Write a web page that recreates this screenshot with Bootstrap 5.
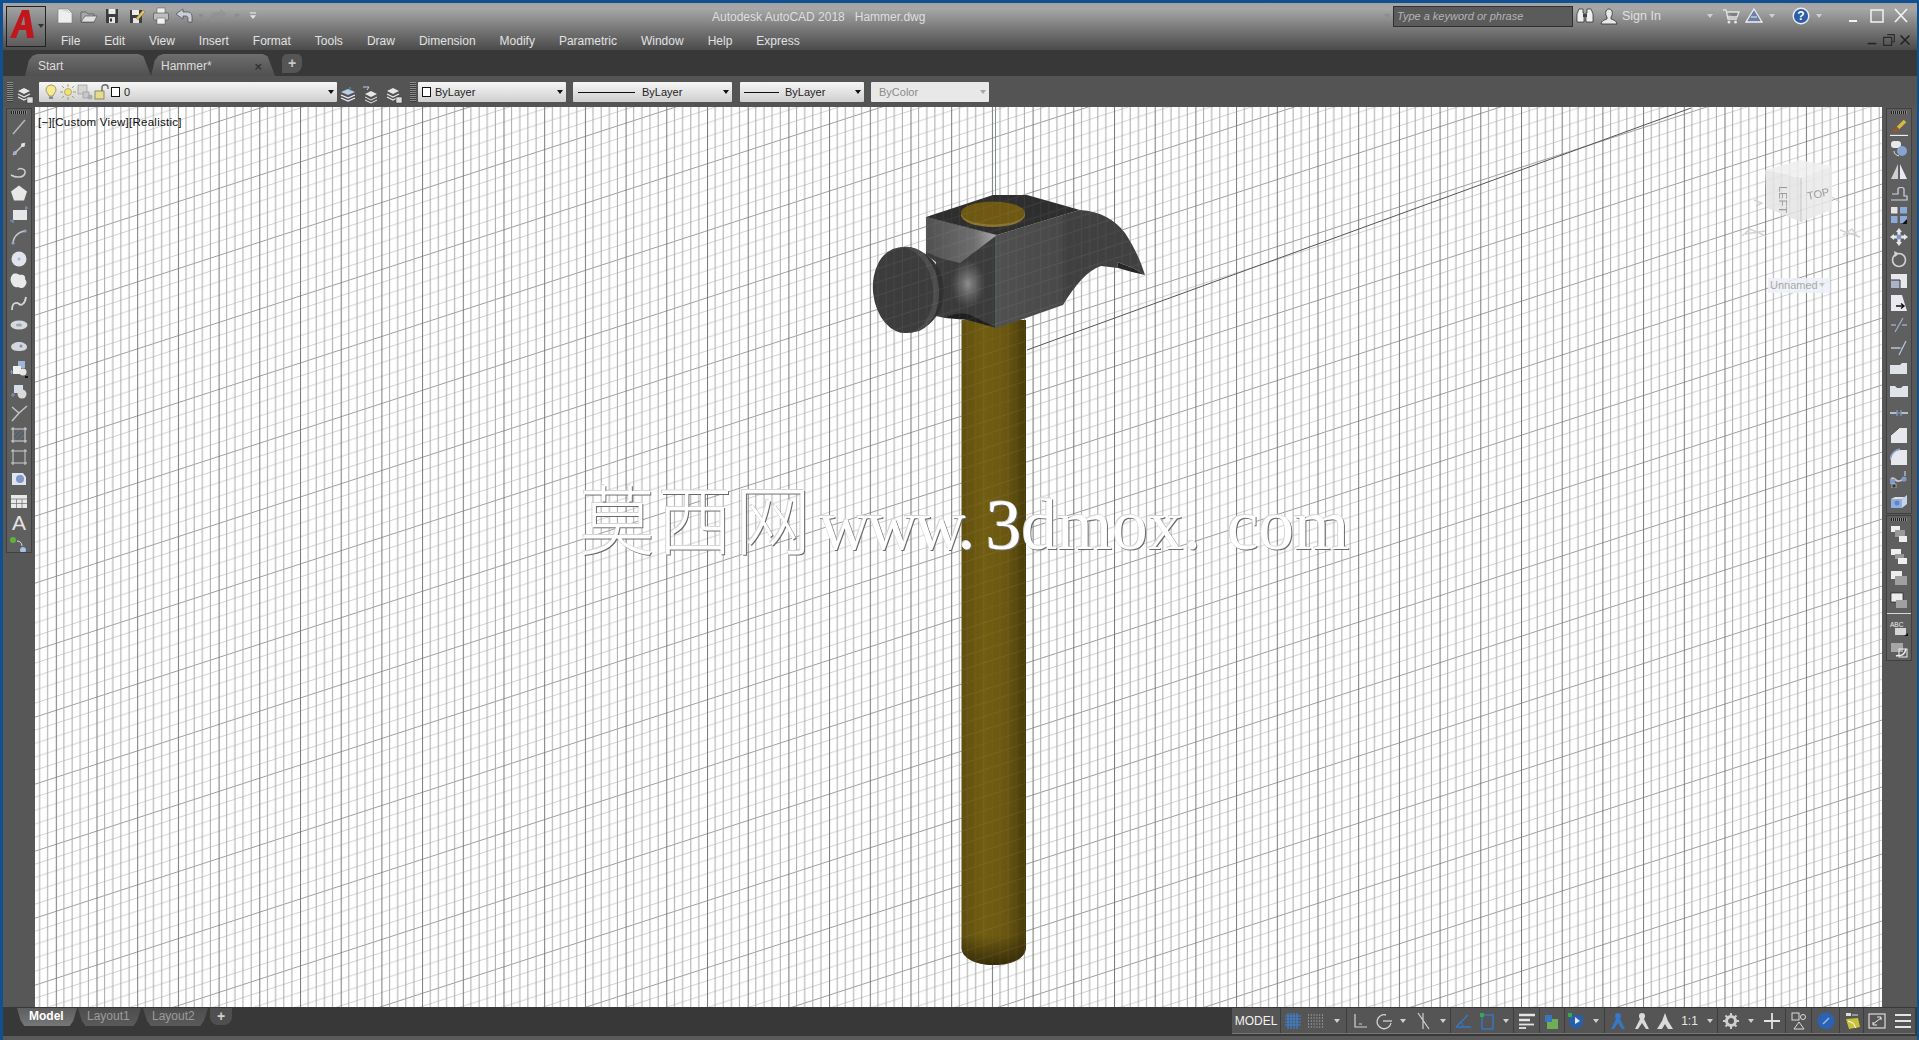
<!DOCTYPE html>
<html lang="en">
<head>
<meta charset="utf-8">
<title>Autodesk AutoCAD 2018 - Hammer.dwg</title>
<link href="https://cdn.jsdelivr.net/npm/bootstrap@5.3.2/dist/css/bootstrap.min.css" rel="stylesheet">
<script src="https://cdn.jsdelivr.net/npm/bootstrap@5.3.2/dist/js/bootstrap.bundle.min.js"></script>
<style>
body{background:#0f4f92;font-family:"Liberation Sans",Arial,sans-serif;font-size:12px;color:#ddd;}
#acad-win{padding:3px 2px 0 3px;height:1040px;width:1919px;}
.ic{width:18px;height:18px;display:block;}
.cell{height:100%;flex:none;}
.ac-caret{width:0;height:0;border-left:3px solid transparent;border-right:3px solid transparent;border-top:4px solid #d0d0d0;}
.ac-caret.dim{border-top-color:#8c8c8c;}
.sc-10{width:10px}.sc-12{width:12px}.sc-13{width:13px}.sc-14{width:14px}.sc-15{width:15px}.sc-16{width:16px}.sc-17{width:17px}.sc-18{width:18px}.sc-20{width:20px}.sc-22{width:22px}.sc-23{width:23px}.sc-24{width:24px}.sc-25{width:25px}.sc-26{width:26px}.sc-27{width:27px}.sc-48{width:48px}

/* title + menu */
#ac-head{height:47px;background:linear-gradient(#a2a1a1 0,#a8a7a7 12%,#7b7b7b 52%,#4b4b4b 100%);}
#ac-logo{width:40px;height:41px;margin:3px 0 0 3px;border:1px solid #222;background:linear-gradient(#a2a2a2,#5c5c5c);position:relative;flex:none;}
#ac-logo .ac-caret{position:absolute;right:1px;top:17px;border-top-color:#333;}
#ac-rows{min-width:0;}
.hd-row1{height:26px;}
.hd-row2{height:21px;}
#qat{margin-left:7px;}
#ac-title{margin-left:452px;white-space:pre;color:#dfdfdf;font-size:12px;padding-top:1px;}
#ac-search{width:180px;height:21px;flex:none;border-radius:0;border:1px solid #2f2f2f;background:#5b5b5b;color:#bbb;padding:0 3px;font-size:11px;font-style:italic;min-height:0;}
#ac-search::placeholder{color:#b4b4b4;opacity:1;}
.signin-cell{width:79px;padding-left:1px;font-size:12.5px;color:#e0e0e0;}
#ac-menu{margin:3px 0 0 15px;gap:24px;}
#ac-menu .nav-link{padding:0;color:#e2e2e2;font-size:12px;line-height:18px;}

/* file tabs */
#ac-tabs{height:26px;background:#383838;padding-left:22px;}
.ftab{height:22px;background:linear-gradient(#6e6e6e,#505050);padding:2px 0 0 13px;color:#dcdcdc;clip-path:polygon(0 100%,3% 30%,6% 8%,10% 0,90% 0,94% 10%,100% 100%);position:relative;}
.ftab-a{width:126px;}
.ftab-b{width:124px;padding-left:10px;}
.ftab-x{position:absolute;right:13px;top:3px;color:#333;font-weight:700;font-size:13px;}
.ftab-new{width:20px;height:19px;margin-left:7px;background:#555;border-radius:5px 5px 8px 0;color:#c8c8c8;font-weight:700;font-size:14px;line-height:19px;text-align:center;}

/* combos row */
#ac-tools{height:31px;background:#545454;padding-top:6px;}
.ac-grip{width:6px;height:20px;flex:none;background:repeating-linear-gradient(#8d8d8d 0 1px,#3e3e3e 1px 2px);}
.ac-combo{height:20px;flex:none;background:linear-gradient(#f6f6f6,#cfcfcf);color:#222;font-size:11px;padding:0 3px 0 4px;border-radius:1px;}
.ac-combo .ac-caret{border-top-color:#111;margin-left:auto;}
.ac-combo .ic{width:16px;height:16px;margin-right:1px;}
.cb-layer{width:298px;margin-left:3px;}
.cb-color{width:148px;margin-left:2px;}
.cb-ltype{width:159px;}
.cb-lw{width:124px;}
.cb-plot{width:118px;background:#e8e8e8;color:#8a8a8a;}
.cb-plot .ac-caret{border-top-color:#a5a5a5;}
.swatch{width:9px;height:10px;border:1px solid #111;background:#fff;flex:none;}
.ln-a{width:57px;height:1px;background:#111;margin:0 7px 0 1px;flex:none;}
.ln-b{width:35px;height:1px;background:#111;margin:0 6px 0 0;flex:none;}
.gap-7{width:7px;flex:none;}
.gap-8{width:8px;flex:none;}

/* middle */
#ac-mid{height:900px;}
.gutter-l{width:32px;background:#575757;}
.gutter-r{width:35px;background:#575757;}
.ac-pal{width:24px;background:#5f5f5f;outline:1px solid #404040;}
.pal-l{height:443px;margin:2px 0 0 4px;}
.pal-r1{height:404px;margin:2px 0 0 5px;}
.pal-r2{height:144px;margin:3px 0 0 5px;}
.pal-grip{height:7px;flex:none;background:repeating-linear-gradient(90deg,#1e1e1e 0 1px,#8a8a8a 1px 2px) center 2px/16px 3px no-repeat;}
.pal-cell{height:22px;flex:none;}
.pal-sep{height:6px;flex:none;background:linear-gradient(#5f5f5f 2px,#d8d8d8 2px 3px,#5f5f5f 3px);}
.pal-a{color:#e4e4e4;font-size:21px;line-height:22px;}
#ac-canvas{flex:1 1 0;min-width:0;background:#fff;overflow:hidden;}
#ac-canvas svg{display:block;}
#ac-hud{left:3px;top:7px;color:#111;font-size:11.5px;letter-spacing:.25px;line-height:16px;}
#ac-wm{left:544px;top:366px;height:86px;white-space:nowrap;color:#fff;text-shadow:1px 1px 0 #6a6a6a,-1px -1px 0 #d6d6d6;pointer-events:none;}
#ac-wm .wm-cn{font-family:"Noto Sans CJK SC",sans-serif;font-weight:300;font-size:76px;letter-spacing:2px;line-height:86px;}
#ac-wm .wm-en{font-family:"Liberation Serif",serif;font-size:71px;line-height:86px;}
#ac-wm .wm-www{margin-left:6px;letter-spacing:-3.5px;}
#ac-wm .wm-dom{margin-left:14px;}
#ac-wm .wm-com{margin-left:26px;}

/* bottom */
#ac-bottom{height:33px;background:#383838;border-bottom:4px solid #5a5a5a;}
.ltabs{padding-left:14px;padding-top:1px;}
.ltab{height:18px;color:#9c9c9c;font-size:12px;line-height:17px;background:linear-gradient(#4d4d4d,#5a5a5a);clip-path:polygon(0 0,100% 0,94% 70%,88% 100%,12% 100%,6% 70%);}
.lt-m{width:60px;padding-left:12px;background:linear-gradient(#5e5e5e,#767676);color:#fff;font-weight:700;}
.lt-1{width:63px;padding-left:9px;margin-left:1px;}
.lt-2{width:65px;padding-left:9px;margin-left:2px;}
.lt-new{width:22px;height:17px;margin-left:2px;background:#4f4f4f;border-radius:0 0 8px 8px;text-align:center;color:#d0d0d0;font-weight:700;font-size:14px;line-height:16px;}
#ac-status{height:25px;margin:1px 2px 0 auto;background:#555;box-shadow:0 1px 0 #777;}
#ac-status .sl{margin-left:1px;box-shadow:-1px 0 0 #3d3d3d;}
.sb-model{color:#f2f2f2;font-size:12px;}
.sb-scale{color:#e6e6e6;font-size:12px;}
</style>
</head>
<body class="m-0 overflow-hidden">

<svg class="d-none" xmlns="http://www.w3.org/2000/svg">
  <defs>
    <linearGradient id="blu" x1="0" y1="0" x2="1" y2="1"><stop offset="0" stop-color="#e4e9f2"/><stop offset="1" stop-color="#7f9cc8"/></linearGradient>
  </defs>
  <!-- left palette -->
  <symbol id="d-line" viewBox="0 0 18 18"><path d="M3 16 15 2" stroke="#b5b5b5" stroke-width="1.6" fill="none"/></symbol>
  <symbol id="d-xline" viewBox="0 0 18 18"><path d="M3 15 15 3" stroke="#c8c8c8" stroke-width="1.4"/><circle cx="5" cy="13" r="2" fill="#9db4d6"/><circle cx="13" cy="5" r="2" fill="#dfe6f0"/></symbol>
  <symbol id="d-pline" viewBox="0 0 18 18"><path d="M1 13c5 3 13 3 14-2 1-4-6-6-7-3" stroke="#cfcfcf" stroke-width="1.5" fill="none"/></symbol>
  <symbol id="d-poly" viewBox="0 0 18 18"><path d="M9 1.5 17 7.5 14 16.5H4L1 7.5Z" fill="#e8e8e8"/></symbol>
  <symbol id="d-rect" viewBox="0 0 18 18"><rect x="3" y="4" width="14" height="10" fill="#e4e6ea"/><path d="M0 15h3M3 13v4M15 2h3M16 0v4" stroke="#7f9cc8" stroke-width="1"/></symbol>
  <symbol id="d-arc" viewBox="0 0 18 18"><path d="M3 16C3 9 8 4 15 3" stroke="#c6c6c6" stroke-width="1.6" fill="none"/><circle cx="15" cy="3" r="1.6" fill="#8aa4cc"/><circle cx="3" cy="15" r="1.6" fill="#8aa4cc"/></symbol>
  <symbol id="d-circ" viewBox="0 0 18 18"><circle cx="9" cy="9" r="7.5" fill="#dfe3ec"/><circle cx="9" cy="9" r="1.5" fill="#a8b6d0"/></symbol>
  <symbol id="d-cloud" viewBox="0 0 18 18"><path d="M3 2c3-1 5 0 7 1 3-1 6 1 5 4 2 2 2 5 0 7-2 3-5 2-7 1-3 1-5-1-6-3-2-3-2-7 1-10Z" fill="#e9e9e9"/></symbol>
  <symbol id="d-spl" viewBox="0 0 18 18"><path d="M2 16C2 8 7 8 9 10s6 0 7-7" stroke="#d6d6d6" stroke-width="1.8" fill="none"/></symbol>
  <symbol id="d-ell" viewBox="0 0 18 18"><ellipse cx="9" cy="9" rx="8.5" ry="4.5" fill="#d7d9dd"/><ellipse cx="9" cy="9" rx="3" ry="1.5" fill="#9aa6ba"/></symbol>
  <symbol id="d-ella" viewBox="0 0 18 18"><path d="M1 9c0-3 4-5 8-5s8 2 8 5-4 4-8 4-6-1-7-2" fill="#d3d6dc"/><circle cx="11" cy="8" r="1.5" fill="#88a"/></symbol>
  <symbol id="d-ins" viewBox="0 0 18 18"><rect x="8" y="1" width="7" height="7" fill="#9fb6da"/><rect x="3" y="6" width="8" height="8" fill="#eceff3"/><circle cx="13" cy="12" r="3.5" fill="#e6e6e6"/><path d="M15 16h3v2h-3z" fill="#111"/><path d="M0 12h3M1.500 10v4" stroke="#7f9cc8"/></symbol>
  <symbol id="d-blk" viewBox="0 0 18 18"><rect x="4" y="3" width="9" height="8" fill="#d5dde9"/><circle cx="12" cy="12" r="4.500" fill="#d9d9d9"/><path d="M1 13h4M3 11v4" stroke="#7f9cc8"/></symbol>
  <symbol id="d-pt" viewBox="0 0 18 18"><path d="M2 3 9 9 17 2M9 9 2 17" stroke="#c3c3c3" stroke-width="1.500" fill="none"/></symbol>
  <symbol id="d-hat" viewBox="0 0 18 18"><rect x="3" y="3" width="12" height="12" fill="url(#blu)"/><path d="M1 3h16M1 15h16M3 1v16M15 1v16" stroke="#e6e6e6" stroke-width=".9"/><path d="M4 14 14 4M4 9l5-5M9 14l5-5" stroke="#5b7db4" stroke-width=".7"/></symbol>
  <symbol id="d-gra" viewBox="0 0 18 18"><rect x="3" y="3" width="12" height="12" fill="url(#blu)"/><path d="M1 3h16M1 15h16M3 1v16M15 1v16" stroke="#dcdcdc" stroke-width=".9"/></symbol>
  <symbol id="d-reg" viewBox="0 0 18 18"><path d="M2 3h11l3 4v8H2Z" fill="#dfe5ef"/><circle cx="10" cy="9" r="4" fill="#7f98c4"/></symbol>
  <symbol id="d-tab" viewBox="0 0 18 18"><rect x="1" y="3" width="16" height="13" fill="#e9e9e9"/><path d="M1 7h16M1 11.500h16M6.500 7v9M12 7v9" stroke="#777" stroke-width=".8"/></symbol>
  <symbol id="d-add" viewBox="0 0 18 18"><circle cx="3" cy="4" r="3" fill="#63b03c"/><circle cx="13" cy="14" r="3.500" fill="#a8c4e4" stroke="#222" stroke-width=".5"/><path d="M7 5c3 0 5 2 5 5" stroke="#ddd" fill="none"/></symbol>
  <!-- right palette -->
  <symbol id="m-erase" viewBox="0 -2 18 18"><path d="M15 1 8 8" stroke="#d8b93c" stroke-width="3.600"/><path d="M8 8 4 12" stroke="#8c5a2c" stroke-width="4"/><path d="M0 15.500h18" stroke="#eee" stroke-width="1.300"/></symbol>
  <symbol id="m-copy" viewBox="0 0 18 18"><rect x="1" y="1" width="10" height="7" rx="3" fill="#e6e8ea"/><circle cx="12" cy="11" r="5" fill="#86a4cf"/><path d="M4 11c0 3 2 4 5 5" stroke="#ddd" fill="none"/></symbol>
  <symbol id="m-mir" viewBox="0 0 18 18"><path d="M8 2v15H1Z" fill="#cfcfcf"/><path d="M10 2v15h7Z" fill="#e8ecf2"/></symbol>
  <symbol id="m-off" viewBox="0 0 18 18"><path d="M1 16h16v-4h-3V5c0-2-6-2-6 0v5H2" stroke="#cfd6e2" stroke-width="1.200" fill="none"/></symbol>
  <symbol id="m-arr" viewBox="0 0 18 18"><rect x="1" y="1" width="6.500" height="6.500" fill="#e4e4e4"/><rect x="10" y="1" width="7" height="6.500" fill="#8aaad8"/><rect x="1" y="10" width="6.500" height="7" fill="#8aaad8"/><path d="M10 10h7v7h-7z" fill="#8aaad8"/><path d="M17 13v5h-5Z" fill="#111"/></symbol>
  <symbol id="m-mov" viewBox="0 0 18 18"><path d="M9 0 12 4H10.500V7.500H14V6L18 9 14 12V10.500H10.500V14H12L9 18 6 14H7.500V10.500H4V12L0 9 4 6V7.500H7.500V4H6Z" fill="#e3e7ee"/><circle cx="9" cy="9" r="2.400" fill="#7f98c4"/></symbol>
  <symbol id="m-rot" viewBox="0 0 18 18"><circle cx="9" cy="10" r="6.500" stroke="#d4d4d4" stroke-width="1.600" fill="none"/><path d="M4 1 9 3.500 5 7Z" fill="#d4d4d4"/></symbol>
  <symbol id="m-sca" viewBox="0 0 18 18"><rect x="1" y="2" width="16" height="14" fill="#e6e8ec"/><rect x="1" y="8" width="9" height="8" fill="#a9b4c6"/><path d="M10 16V8H1" stroke="#333" fill="none"/></symbol>
  <symbol id="m-str" viewBox="0 0 18 18"><path d="M1 1h11l5 16H1Z" fill="#e9e9ef"/><path d="M6 12h8M11 9.500 14 12l-3 2.500" stroke="#111" stroke-width="1.400" fill="none"/></symbol>
  <symbol id="m-tri" viewBox="0 0 18 18"><path d="M1 9h5M12 9h5" stroke="#c9c9d6" stroke-width="1.200"/><path d="M5 16 13 2" stroke="#9fb3d3" stroke-width="1.200"/></symbol>
  <symbol id="m-ext" viewBox="0 0 18 18"><path d="M1 10h9" stroke="#ddd" stroke-width="1.200"/><path d="M10 10h3" stroke="#8aa4cc"/><path d="M9 17 16 3" stroke="#b7c4d8" stroke-width="1.200"/></symbol>
  <symbol id="m-brk" viewBox="0 0 18 18"><path d="M0 5h10l2-2h5v11H0Z" fill="#dfe3e8"/></symbol>
  <symbol id="m-brk2" viewBox="0 0 18 18"><path d="M0 4h5l2 2h4l2-2h5v11H0Z" fill="#dfe3ec"/></symbol>
  <symbol id="m-join" viewBox="0 0 18 18"><path d="M0 9h7M11 9h7" stroke="#d8dbe2" stroke-width="1.300"/><path d="M7 6v6M11 6v6M7 9h4" stroke="#7f9cc8" stroke-width="1.200"/></symbol>
  <symbol id="m-cha" viewBox="0 0 18 18"><path d="M9 2h8v15H1V9Z" fill="#e6e8ee"/><path d="M1 9l8-7" stroke="#4a4a4a" stroke-width="1"/></symbol>
  <symbol id="m-fil" viewBox="0 0 18 18"><path d="M10 2h7v15H1v-6c0-5 4-9 9-9Z" fill="#e6e8ee"/><path d="M0 12C1 6 5 2 10 1" stroke="#8aa4cc" stroke-width="1.400" fill="none"/></symbol>
  <symbol id="m-ble" viewBox="0 0 18 18"><path d="M1 9c4-3 4 3 8 2s5-2 6-2" stroke="#c9c9c9" stroke-width="1.800" fill="none"/><rect x="0" y="9" width="5" height="5" fill="#7f9cc8"/><circle cx="14" cy="9" r="2.600" fill="#7f9cc8"/><path d="M15 6V1" stroke="#ddd"/><rect x="2" y="14" width="4" height="4" fill="#333" stroke="#ddd" stroke-width=".6"/></symbol>
  <symbol id="m-exp" viewBox="0 0 18 18"><path d="M1 7 5 5H15L12 7Z" fill="#e0e0e0"/><rect x="1" y="7" width="11" height="9" fill="#8fb0de"/><path d="M12 7 17 3V12L12 16Z" fill="#c4d4ea"/><circle cx="7" cy="11" r="2.500" fill="#5e86bf"/></symbol>
  <symbol id="o-1" viewBox="0 0 18 18"><rect x="1" y="1" width="9" height="6" fill="#eee"/><rect x="5" y="5" width="10" height="7" fill="#9a9a9a"/><rect x="9" y="11" width="8" height="6" fill="#eee"/></symbol>
  <symbol id="o-2" viewBox="0 0 18 18"><rect x="1" y="2" width="10" height="6" fill="#eee"/><rect x="5" y="7" width="9" height="5" fill="#9a9a9a"/><rect x="8" y="11" width="9" height="6" fill="#eee"/></symbol>
  <symbol id="o-3" viewBox="0 0 18 18"><rect x="1" y="2" width="11" height="8" fill="#eee"/><rect x="5" y="7" width="12" height="9" fill="#a0a0a0"/></symbol>
  <symbol id="o-4" viewBox="0 0 18 18"><rect x="1" y="2" width="12" height="9" fill="#eee" stroke="#222" stroke-width=".7"/><rect x="6" y="9" width="11" height="8" fill="#a0a0a0"/></symbol>
  <symbol id="o-5" viewBox="0 0 18 18"><text x="0" y="8" font-family="Liberation Sans,sans-serif" font-size="6.500" fill="#eee">ABC</text><rect x="5" y="9" width="11" height="7" fill="#d6d6d6"/><path d="M14 17h4v-3Z" fill="#111"/></symbol>
  <symbol id="o-6" viewBox="0 0 18 18"><rect x="1" y="2" width="12" height="9" fill="#a6a6a6"/><path d="M6 15c3-1 8 1 10-7" stroke="#eee" stroke-width="1.500" fill="none"/><rect x="9" y="8" width="8" height="8" fill="none" stroke="#eee"/></symbol>
  <!-- title bar -->
  <symbol id="t-new" viewBox="0 0 18 18"><path d="M2 2h10l4 4v10H2Z" fill="#eee" stroke="#777" stroke-width=".6"/><path d="M2 2h10v4h4" fill="#cfcfcf"/></symbol>
  <symbol id="t-open" viewBox="0 0 18 18"><path d="M1 15V5h5l2 2h6v8Z" fill="#a9a9a9" stroke="#444" stroke-width=".6"/><path d="M1 15 5 9h12l-3 6Z" fill="#e0e0e0" stroke="#444" stroke-width=".6"/></symbol>
  <symbol id="t-save" viewBox="0 0 18 18"><rect x="3" y="2" width="12" height="14" fill="#3d3d3d"/><rect x="5.500" y="2" width="7" height="5" fill="#ececec"/><rect x="6" y="10" width="6" height="6" fill="#e4e4e4"/><rect x="7" y="11.500" width="2" height="3" fill="#333"/></symbol>
  <symbol id="t-saveas" viewBox="0 0 18 18"><rect x="2" y="3" width="12" height="13" fill="#3d3d3d"/><rect x="4" y="3" width="7" height="5" fill="#ececec"/><rect x="5" y="11" width="6" height="5" fill="#e4e4e4"/><path d="M8 11 15 3l2 2-7 8Z" fill="#e6c558" stroke="#555" stroke-width=".4"/></symbol>
  <symbol id="t-print" viewBox="0 0 18 18"><rect x="5" y="1" width="8" height="6" fill="#eee" stroke="#555" stroke-width=".5"/><rect x="1.500" y="6" width="15" height="7" rx="1" fill="#bdbdbd" stroke="#444" stroke-width=".6"/><rect x="5" y="11" width="8" height="6" fill="#f2f2f2" stroke="#555" stroke-width=".5"/></symbol>
  <symbol id="t-undo" viewBox="0 0 18 18"><path d="M1 7 8 2V5h5c3 0 4 3 4 5v5h-4v-4c0-1-1-2-2-2H8v3Z" fill="#c9cfd6" stroke="#3a3a3a" stroke-width=".6"/></symbol>
  <symbol id="t-redo" viewBox="0 0 18 18"><path d="M17 7 10 2V5H5C2 5 1 8 1 10v5h4v-4c0-1 1-2 2-2h3v3Z" fill="#8f8f8f" opacity=".6"/></symbol>
  <symbol id="t-cust" viewBox="0 0 18 18"><path d="M5 5h8" stroke="#e5e5e5" stroke-width="1.500"/><path d="M5 8h8l-4 5Z" fill="#e5e5e5"/></symbol>
  <symbol id="t-bino" viewBox="0 0 18 18"><path d="M3 2h4v4h1v9H1V7Z" fill="#efefef" stroke="#222" stroke-width=".7"/><path d="M15 2h-4v4h-1v9h7V7Z" fill="#efefef" stroke="#222" stroke-width=".7"/><path d="M7 7h4v3H7Z" fill="#444"/></symbol>
  <symbol id="t-user" viewBox="0 0 18 18"><path d="M1 17c1-4 4-4 6-5V10C5 8 5 2 9 2s4 6 2 8v2c2 1 5 1 6 5Z" fill="#e8e8e8" stroke="#2f2f2f" stroke-width=".8"/></symbol>
  <symbol id="t-cart" viewBox="0 0 18 18"><path d="M1 3h3l2 9h9M5 5h12l-2 5H6" stroke="#e4e4e4" stroke-width="1.300" fill="#7e7e7e"/><circle cx="7" cy="15" r="1.500" fill="#e4e4e4"/><circle cx="13.500" cy="15" r="1.500" fill="#e4e4e4"/></symbol>
  <symbol id="t-a360" viewBox="0 0 18 18"><path d="M9 2 17 15H1Z" fill="#6c7fa6" stroke="#f0f0f0" stroke-width="1.300"/><path d="M6 10h6" stroke="#f0f0f0"/></symbol>
  <symbol id="t-help" viewBox="0 0 18 18"><circle cx="9" cy="9" r="7.800" fill="#2f5ea8" stroke="#e8eef8" stroke-width="1.400"/><text x="9" y="13.300" text-anchor="middle" font-family="Liberation Sans,sans-serif" font-weight="700" font-size="12" fill="#fff">?</text></symbol>
  <symbol id="t-min" viewBox="0 0 18 18"><rect x="5" y="13" width="8" height="2" fill="#f2f2f2"/></symbol>
  <symbol id="t-max" viewBox="0 0 18 18"><rect x="3" y="3" width="12" height="12" fill="none" stroke="#f2f2f2" stroke-width="1.500"/></symbol>
  <symbol id="t-close" viewBox="0 0 18 18"><path d="M3 2 15 15M15 2 3 15" stroke="#f2f2f2" stroke-width="1.700"/></symbol>
  <symbol id="t-rest" viewBox="0 0 18 18"><path d="M7 3h8v8h-3M3 6h9v9H3Z" fill="none" stroke="#2a2a2a" stroke-width="1.300"/></symbol>
  <symbol id="t-dmin" viewBox="0 0 18 18"><rect x="4" y="12" width="9" height="1.600" fill="#222"/></symbol>
  <symbol id="t-dx" viewBox="0 0 18 18"><path d="M4 4 14 14M14 4 4 14" stroke="#222" stroke-width="1.800"/></symbol>
  <!-- layer row -->
  <symbol id="l-props" viewBox="0 0 18 18"><path d="M2 5 8 2 14 5 8 8Z" fill="#e6e6e6"/><path d="M2 8 8 11 14 8M2 11 8 14 11 12.500" stroke="#e6e6e6" fill="none" stroke-width="1.300"/><rect x="11" y="11" width="6" height="6" fill="#ddd" stroke="#333" stroke-width=".5"/></symbol>
  <symbol id="l-state" viewBox="0 0 18 18"><path d="M2 6 9 3 16 6 9 9Z" fill="#b7cde8"/><path d="M2 9 9 12 16 9M2 12 9 15 16 12" stroke="#eef" fill="none" stroke-width="1.300"/><path d="M11 1v4" stroke="#4aa"/></symbol>
  <symbol id="l-prev" viewBox="0 0 18 18"><path d="M3 8 9 5 15 8 9 11Z" fill="#e6e6e6"/><path d="M3 11 9 14 15 11M3 14 9 17 15 14" stroke="#e6e6e6" fill="none"/><path d="M1 1h6l-2 3" stroke="#b9d2ea" fill="none"/></symbol>
  <symbol id="l-bulb" viewBox="0 0 16 16"><path d="M8 1c3 0 5 2 5 5 0 2-2 3-3 6H6C5 9 3 8 3 6c0-3 2-5 5-5Z" fill="#f8ea8a" stroke="#776" stroke-width=".7"/><rect x="6" y="12.500" width="4" height="2.500" fill="#888"/></symbol>
  <symbol id="l-sun" viewBox="0 0 16 16"><circle cx="8" cy="8" r="3.500" fill="#f3e26c" stroke="#776" stroke-width=".5"/><path d="M8 0v3M8 13v3M0 8h3M13 8h3M2 2l2 2M12 12l2 2M2 14l2-2M12 4l2-2" stroke="#a69a3a" stroke-width=".9"/></symbol>
  <symbol id="l-free" viewBox="0 0 16 16"><rect x="1" y="1" width="9" height="9" fill="#d4d4d4" stroke="#8c8c8c" stroke-width=".6"/><rect x="6" y="8" width="6" height="6" fill="#c4c9cf" stroke="#8c8c8c" stroke-width=".6"/><circle cx="13" cy="13" r="2.500" fill="#aaa"/></symbol>
  <symbol id="l-lock" viewBox="0 0 16 16"><rect x="1" y="7" width="9" height="8" fill="#e6dc8c" stroke="#775" stroke-width=".8"/><path d="M8 7V3c0-3 6-3 6 0v2" stroke="#666" stroke-width="1.400" fill="none"/></symbol>
  <!-- status bar -->
  <symbol id="s-grid" viewBox="0 0 18 18"><path d="M1 4h16M1 7h16M1 10h16M1 13h16M4 1v16M7 1v16M10 1v16M13 1v16" stroke="#3b82d8" stroke-width="1.200"/></symbol>
  <symbol id="s-snap" viewBox="0 0 18 18"><path d="M1 3h16M1 6h16M1 9h16M1 12h16M1 15h16" stroke="#c4c4c4" stroke-width="1.100" stroke-dasharray="1 1.800"/></symbol>
  <symbol id="s-orth" viewBox="0 0 18 18"><path d="M4 2v13h12M8 12h3" stroke="#d2d2d2" stroke-width="1.200" fill="none"/></symbol>
  <symbol id="s-pol" viewBox="0 0 18 18"><path d="M16 11A7 7 0 1 1 11 3" stroke="#d2d2d2" stroke-width="1.300" fill="none"/><path d="M8 9h9" stroke="#d2d2d2" stroke-width="1.300"/></symbol>
  <symbol id="s-iso" viewBox="0 0 18 18"><path d="M4 1 15 17M9 1v16" stroke="#cfcfcf" stroke-width="1.200" fill="none"/></symbol>
  <symbol id="s-osn" viewBox="0 0 18 18"><path d="M2 15H17M2 15 14 3" stroke="#3577c8" stroke-width="1.400" fill="none"/><path d="M9 15A7 7 0 0 0 7 10" stroke="#3577c8" fill="none"/></symbol>
  <symbol id="s-3d" viewBox="0 0 18 18"><rect x="4" y="3" width="11" height="14" fill="none" stroke="#3577c8" stroke-width="1.400"/><rect x="2" y="1" width="4" height="4" fill="#37a84e"/></symbol>
  <symbol id="s-lw" viewBox="0 0 18 18"><path d="M1 3h16" stroke="#e4e4e4" stroke-width="2.500"/><path d="M1 8h11" stroke="#e4e4e4" stroke-width="2.500"/><path d="M1 12.500h15" stroke="#e4e4e4" stroke-width="1.800"/><path d="M1 16h7" stroke="#e4e4e4" stroke-width="1.800"/></symbol>
  <symbol id="s-tr" viewBox="0 0 18 18"><rect x="4" y="7" width="11" height="10" fill="#6fae55"/><rect x="2" y="3" width="7" height="7" fill="#3a76c0"/></symbol>
  <symbol id="s-sel" viewBox="0 0 18 18"><path d="M2 3h14v8c0 4-7 6-7 6s-7-2-7-6Z" fill="#2a5fa8"/><rect x="1" y="1" width="4" height="4" fill="#37a84e"/><path d="M8 5v7l5-3Z" fill="#dfe8f5"/></symbol>
  <symbol id="s-ann1" viewBox="0 0 18 18"><path d="M9 1c3 0 4 3 2 6l5 10h-3L9 11 5 17H2L7 7C5 4 6 1 9 1Z" fill="#3577c8"/></symbol>
  <symbol id="s-ann2" viewBox="0 0 18 18"><path d="M9 1c3 0 4 3 2 6l5 10h-3L9 11 5 17H2L7 7C5 4 6 1 9 1Z" fill="#dadada"/><path d="M13 2l3 3" stroke="#555"/></symbol>
  <symbol id="s-ann3" viewBox="0 0 18 18"><path d="M9 1 12 9 17 17H12L9 12 6 17H1L6 9Z" fill="#dadada"/></symbol>
  <symbol id="s-gear" viewBox="0 0 18 18"><circle cx="9" cy="9" r="4.500" fill="none" stroke="#cfcfcf" stroke-width="3"/><path d="M9 1v3M9 14v3M1 9h3M14 9h3M3.500 3.500l2 2M12.500 12.500l2 2M3.500 14.500l2-2M12.500 5.500l2-2" stroke="#cfcfcf" stroke-width="2"/></symbol>
  <symbol id="s-plus" viewBox="0 0 18 18"><path d="M9 1v16M1 9h16" stroke="#e2e2e2" stroke-width="1.800"/></symbol>
  <symbol id="s-obj" viewBox="0 0 18 18"><rect x="2" y="1" width="7" height="7" fill="none" stroke="#ddd"/><circle cx="13" cy="5" r="2.500" fill="none" stroke="#ddd"/><path d="M9 10 14 17H4Z" fill="none" stroke="#ddd"/></symbol>
  <symbol id="s-hw" viewBox="0 0 18 18"><circle cx="9" cy="9" r="8.500" fill="#2b62b4"/><path d="M6 12 12 6" stroke="#9dbce8" stroke-width="1.500"/></symbol>
  <symbol id="s-acc" viewBox="0 0 18 18"><rect x="3" y="1" width="5" height="3" fill="#ddd"/><path d="M9 3h6" stroke="#ddd"/><path d="M3 7 15 6 17 15 6 17Z" fill="#c7c23a"/><path d="M5 9l5 2 3 5" stroke="#fff" fill="none"/></symbol>
  <symbol id="s-full" viewBox="0 0 18 18"><rect x="1" y="2" width="16" height="14" fill="none" stroke="#dcdcdc" stroke-width="1.200"/><path d="M5 12l8-6M9 5h4v3M5 10v3h4" stroke="#eee" fill="none"/></symbol>
  <symbol id="s-menu" viewBox="0 0 18 18"><path d="M1 3h16M1 9h16M1 15h16" stroke="#e4e4e4" stroke-width="2"/></symbol>
</svg>

<div id="acad-win" class="d-flex flex-column overflow-hidden">

  <header id="ac-head" class="d-flex flex-none">
    <div id="ac-logo">
      <svg width="38" height="39" viewBox="0 0 38 39" class="d-block"><path d="M3 31 15 3H22L27 31H20L19 23H12L9 31ZM14 18H18L17 9Z" fill="#c0171d"/></svg>
      <span class="ac-caret"></span>
    </div>
    <div id="ac-rows" class="flex-grow-1 d-flex flex-column">
      <div class="hd-row1 d-flex align-items-center">
        <div id="qat" class="d-flex align-items-center h-100">
          <span class="cell sc-24 d-flex align-items-center justify-content-center"><svg class="ic"><use href="#t-new"/></svg></span>
          <span class="cell sc-23 d-flex align-items-center justify-content-center"><svg class="ic"><use href="#t-open"/></svg></span>
          <span class="cell sc-24 d-flex align-items-center justify-content-center"><svg class="ic"><use href="#t-save"/></svg></span>
          <span class="cell sc-25 d-flex align-items-center justify-content-center"><svg class="ic"><use href="#t-saveas"/></svg></span>
          <span class="cell sc-23 d-flex align-items-center justify-content-center"><svg class="ic"><use href="#t-print"/></svg></span>
          <span class="cell sc-24 d-flex align-items-center justify-content-center"><svg class="ic"><use href="#t-undo"/></svg></span>
          <span class="cell sc-10 d-flex align-items-center justify-content-center"><i class="ac-caret dim"></i></span>
          <span class="cell sc-26 d-flex align-items-center justify-content-center"><svg class="ic"><use href="#t-redo"/></svg></span>
          <span class="cell sc-10 d-flex align-items-center justify-content-center"><i class="ac-caret dim"></i></span>
          <span class="cell sc-14 ms-1 d-flex align-items-center justify-content-center"><svg class="ic"><use href="#t-cust"/></svg></span>
        </div>
        <div id="ac-title">Autodesk AutoCAD 2018   Hammer.dwg</div>
        <div class="d-flex align-items-center h-100 ms-auto">
          <span class="cell sc-13 d-flex align-items-center justify-content-center"><i class="ac-caret dim"></i></span>
          <input id="ac-search" class="form-control" type="text" placeholder="Type a keyword or phrase" aria-label="Search">
          <span class="cell sc-24 d-flex align-items-center justify-content-center"><svg class="ic"><use href="#t-bino"/></svg></span>
          <span class="cell sc-24 d-flex align-items-center justify-content-center"><svg class="ic"><use href="#t-user"/></svg></span>
          <span class="cell signin-cell d-flex align-items-center">Sign In</span>
          <span class="cell sc-20 d-flex align-items-center justify-content-center"><i class="ac-caret"></i></span>
          <span class="cell sc-22 d-flex align-items-center justify-content-center"><svg class="ic"><use href="#t-cart"/></svg></span>
          <span class="cell sc-23 d-flex align-items-center justify-content-center"><svg class="ic"><use href="#t-a360"/></svg></span>
          <span class="cell sc-13 d-flex align-items-center justify-content-center"><i class="ac-caret"></i></span>
          <span class="cell sc-12"></span>
          <span class="cell sc-22 d-flex align-items-center justify-content-center"><svg class="ic"><use href="#t-help"/></svg></span>
          <span class="cell sc-14 d-flex align-items-center justify-content-center"><i class="ac-caret"></i></span>
          <span class="cell sc-14"></span>
          <span class="cell sc-25 d-flex align-items-center justify-content-center"><svg class="ic"><use href="#t-min"/></svg></span>
          <span class="cell sc-24 d-flex align-items-center justify-content-center"><svg class="ic"><use href="#t-max"/></svg></span>
          <span class="cell sc-24 d-flex align-items-center justify-content-center me-1"><svg class="ic"><use href="#t-close"/></svg></span>
        </div>
      </div>
      <div class="hd-row2 d-flex align-items-center">
        <nav id="ac-menu" class="nav flex-nowrap">
          <a class="nav-link" href="#">File</a>
          <a class="nav-link" href="#">Edit</a>
          <a class="nav-link" href="#">View</a>
          <a class="nav-link" href="#">Insert</a>
          <a class="nav-link" href="#">Format</a>
          <a class="nav-link" href="#">Tools</a>
          <a class="nav-link" href="#">Draw</a>
          <a class="nav-link" href="#">Dimension</a>
          <a class="nav-link" href="#">Modify</a>
          <a class="nav-link" href="#">Parametric</a>
          <a class="nav-link" href="#">Window</a>
          <a class="nav-link" href="#">Help</a>
          <a class="nav-link" href="#">Express</a>
        </nav>
        <div class="d-flex align-items-center h-100 ms-auto me-1">
          <span class="cell sc-17 d-flex align-items-center justify-content-center"><svg class="ic"><use href="#t-dmin"/></svg></span>
          <span class="cell sc-16 d-flex align-items-center justify-content-center"><svg class="ic"><use href="#t-rest"/></svg></span>
          <span class="cell sc-16 d-flex align-items-center justify-content-center"><svg class="ic"><use href="#t-dx"/></svg></span>
        </div>
      </div>
    </div>
  </header>

  <div id="ac-tabs" class="d-flex align-items-end flex-none">
    <div class="ftab ftab-a d-flex align-items-center">Start</div>
    <div class="ftab ftab-b d-flex align-items-center">Hammer*<span class="ftab-x">×</span></div>
    <div class="ftab-new align-self-center">+</div>
  </div>

  <div id="ac-tools" class="d-flex align-items-start flex-none">
    <span class="ac-grip ms-1"></span>
    <span class="sc-23 d-flex justify-content-center pt-1 flex-none"><svg class="ic"><use href="#l-props"/></svg></span>
    <div class="ac-combo cb-layer d-flex align-items-center gap-0">
      <svg class="ic"><use href="#l-bulb"/></svg>
      <svg class="ic"><use href="#l-sun"/></svg>
      <svg class="ic"><use href="#l-free"/></svg>
      <svg class="ic"><use href="#l-lock"/></svg>
      <span class="swatch"></span>
      <span class="ms-1">0</span>
      <i class="ac-caret"></i>
    </div>
    <span class="sc-22 d-flex justify-content-center pt-1 flex-none"><svg class="ic"><use href="#l-state"/></svg></span>
    <span class="sc-23 d-flex justify-content-center pt-1 flex-none"><svg class="ic"><use href="#l-prev"/></svg></span>
    <span class="sc-24 d-flex justify-content-center pt-1 flex-none"><svg class="ic"><use href="#l-props"/></svg></span>
    <span class="ac-grip ms-1"></span>
    <div class="ac-combo cb-color d-flex align-items-center">
      <span class="swatch"></span><span class="ms-1">ByLayer</span><i class="ac-caret"></i>
    </div>
    <span class="gap-7"></span>
    <div class="ac-combo cb-ltype d-flex align-items-center">
      <span class="ln-a"></span><span>ByLayer</span><i class="ac-caret"></i>
    </div>
    <span class="gap-8"></span>
    <div class="ac-combo cb-lw d-flex align-items-center">
      <span class="ln-b"></span><span>ByLayer</span><i class="ac-caret"></i>
    </div>
    <span class="gap-7"></span>
    <div class="ac-combo cb-plot d-flex align-items-center ps-2">
      <span>ByColor</span><i class="ac-caret"></i>
    </div>
  </div>

  <main id="ac-mid" class="d-flex flex-none">
    <div class="gutter-l flex-none">
      <div class="ac-pal pal-l d-flex flex-column">
        <div class="pal-grip"></div>
        <div class="pal-cell d-flex align-items-center justify-content-center"><svg class="ic"><use href="#d-line"/></svg></div>
        <div class="pal-cell d-flex align-items-center justify-content-center"><svg class="ic"><use href="#d-xline"/></svg></div>
        <div class="pal-cell d-flex align-items-center justify-content-center"><svg class="ic"><use href="#d-pline"/></svg></div>
        <div class="pal-cell d-flex align-items-center justify-content-center"><svg class="ic"><use href="#d-poly"/></svg></div>
        <div class="pal-cell d-flex align-items-center justify-content-center"><svg class="ic"><use href="#d-rect"/></svg></div>
        <div class="pal-cell d-flex align-items-center justify-content-center"><svg class="ic"><use href="#d-arc"/></svg></div>
        <div class="pal-cell d-flex align-items-center justify-content-center"><svg class="ic"><use href="#d-circ"/></svg></div>
        <div class="pal-cell d-flex align-items-center justify-content-center"><svg class="ic"><use href="#d-cloud"/></svg></div>
        <div class="pal-cell d-flex align-items-center justify-content-center"><svg class="ic"><use href="#d-spl"/></svg></div>
        <div class="pal-cell d-flex align-items-center justify-content-center"><svg class="ic"><use href="#d-ell"/></svg></div>
        <div class="pal-cell d-flex align-items-center justify-content-center"><svg class="ic"><use href="#d-ella"/></svg></div>
        <div class="pal-cell d-flex align-items-center justify-content-center"><svg class="ic"><use href="#d-ins"/></svg></div>
        <div class="pal-cell d-flex align-items-center justify-content-center"><svg class="ic"><use href="#d-blk"/></svg></div>
        <div class="pal-cell d-flex align-items-center justify-content-center"><svg class="ic"><use href="#d-pt"/></svg></div>
        <div class="pal-cell d-flex align-items-center justify-content-center"><svg class="ic"><use href="#d-hat"/></svg></div>
        <div class="pal-cell d-flex align-items-center justify-content-center"><svg class="ic"><use href="#d-gra"/></svg></div>
        <div class="pal-cell d-flex align-items-center justify-content-center"><svg class="ic"><use href="#d-reg"/></svg></div>
        <div class="pal-cell d-flex align-items-center justify-content-center"><svg class="ic"><use href="#d-tab"/></svg></div>
        <div class="pal-cell pal-a d-flex align-items-center justify-content-center">A</div>
        <div class="pal-cell d-flex align-items-center justify-content-center"><svg class="ic"><use href="#d-add"/></svg></div>
      </div>
    </div>

    <div id="ac-canvas" class="position-relative">
      <svg width="1847" height="900" viewBox="35 107 1847 900" xmlns="http://www.w3.org/2000/svg">
        <defs>
          <pattern id="acgrid" width="40.7" height="67" patternUnits="userSpaceOnUse" patternTransform="translate(55.800 106.900) skewY(-18)">
            <g stroke="#d2d2d2" stroke-width="1"><path d="M0 13.400H40.700M0 26.800H40.700M0 40.200H40.700M0 53.600H40.700"/></g>
            <path d="M0 .5H40.700" stroke="#a0a0a0" stroke-width="1"/>
            <g stroke="#a9a9a9" stroke-width="1"><path d="M8.140 0V67M16.280 0V67M24.420 0V67M32.560 0V67"/></g>
            <path d="M.5 0V67" stroke="#777" stroke-width="1"/>
          </pattern>
          <linearGradient id="hdl" x1="0" x2="1" y1="0" y2="0"><stop offset="0" stop-color="#5f4e0e"/><stop offset=".35" stop-color="#725e11"/><stop offset=".7" stop-color="#6a5610"/><stop offset="1" stop-color="#463a09"/></linearGradient>
          <linearGradient id="hdlb" x1="0" x2="0" y1="0" y2="1"><stop offset="0" stop-color="#2e2508" stop-opacity="0"/><stop offset="1" stop-color="#2e2508" stop-opacity=".85"/></linearGradient>
          <linearGradient id="wedge" x1="926" y1="240" x2="995" y2="236" gradientUnits="userSpaceOnUse"><stop offset="0" stop-color="#505050"/><stop offset=".7" stop-color="#6e6e6e"/><stop offset="1" stop-color="#a8a8a8"/></linearGradient>
          <linearGradient id="rface" x1="0" x2="1" y1="0" y2="0"><stop offset="0" stop-color="#505050"/><stop offset="1" stop-color="#484848"/></linearGradient>
          <radialGradient id="neckhi"><stop offset="0" stop-color="#a8a8a8" stop-opacity=".75"/><stop offset="1" stop-color="#8a8a8a" stop-opacity="0"/></radialGradient>
        </defs>
        <rect x="35" y="107" width="1847" height="900" fill="#fff"/>
        <rect x="35" y="107" width="1847" height="900" fill="url(#acgrid)"/>
        <path d="M1027 350 1691 108" stroke="#555" stroke-width="1" fill="none"/>
        <path d="M995.500 107V233" stroke="#7b9484" stroke-width="1"/>

        <!-- hammer -->
        <path d="M961.500 320V948C962 958 975 965 994 965S1025 958 1026 948V320Z" fill="url(#hdl)"/>
        <path d="M961.500 935V948C962 958 975 965 994 965S1025 958 1026 948V935Z" fill="url(#hdlb)"/>
        <path d="M926 217 997 235V328L968 320Q952 314 945 318L936 316 936 262 926 255Z" fill="#3b3b3b"/>
        <path d="M926 217 997 235 960 263 940 258 926 252Z" fill="url(#wedge)"/>
        <ellipse cx="968" cy="284" rx="17" ry="24" fill="url(#neckhi)"/>
        <path d="M945 318Q955 312 968 314L997 328 968 320Z" fill="#1f1f1f"/>
        <path d="M997 235 1063 215 1063 305 997 328Z" fill="url(#rface)"/>
        <path d="M1063 215 1080 210C1100 211 1115 220 1125 233 1135 248 1141 262 1145 275L1133 268 1117 262 1118 268 1101 266C1088 270 1075 285 1063 305Z" fill="#404040"/>
        <path d="M1117 262 1133 268 1145 275 1132 272 1118 268Z" fill="#242424"/>
        <path d="M926 217 993 195 1027 195 1080 210 1063 215 997 235Z" fill="#2e2e2e"/>
        <ellipse cx="993" cy="215" rx="32" ry="12" fill="#8a7530"/>
        <ellipse cx="993" cy="213" rx="32" ry="11.500" fill="#6e5812"/>
        <path d="M996 235V328" stroke="#5d7d68" stroke-width="1"/>
        <g transform="rotate(-6 905 290)">
          <path d="M905 247C925 247 944 265 944 290S925 333 905 333Z" fill="#303030"/>
          <ellipse cx="909" cy="290" rx="30" ry="43" fill="#4c4c4c"/>
          <ellipse cx="903" cy="290" rx="30" ry="43" fill="#3c3c3c"/>
        </g>
        <rect x="870" y="190" width="280" height="780" fill="url(#acgrid)" opacity=".1"/>

        <!-- view cube -->
        <g opacity=".85">
          <path d="M1765 170 1800 160 1832 166 1801 178Z" fill="#efefef"/>
          <path d="M1765 170 1801 178V222L1767 208Z" fill="#e4e4e4"/>
          <path d="M1801 178 1832 166V210L1801 222Z" fill="#e9e9e9"/>
          <path d="M1801 178V222" stroke="#bbb"/>
          <text x="0" y="0" transform="translate(1779 186) rotate(90)" font-family="Liberation Sans,sans-serif" font-size="11" fill="#8d8d8d">LEFT</text>
          <text x="0" y="0" transform="translate(1808 200) rotate(-12)" font-family="Liberation Sans,sans-serif" font-size="11" fill="#8d8d8d">TOP</text>
          <path d="M1745 234 1765 231M1742 236 1750 229 1766 236M1840 230 1860 237M1843 235 1852 229 1858 237M1754 200l8 3-6 3M1832 197l8 5" stroke="#cbcbcb" stroke-width="1.400" fill="none"/>
          <rect x="1768" y="278" width="62" height="15" fill="#eef0f8"/>
          <text x="1770" y="289" font-family="Liberation Sans,sans-serif" font-size="11" fill="#9a9a9a">Unnamed</text>
          <path d="M1819 283h6l-3 4Z" fill="#c2c2c2"/>
        </g>
      </svg>
      <div id="ac-hud" class="position-absolute">[−][Custom View][Realistic]</div>
      <div id="ac-wm" class="position-absolute d-flex align-items-baseline"><span class="wm-cn">莫西网</span><span class="wm-en wm-www">www.</span><span class="wm-en wm-dom">3dmox.</span><span class="wm-en wm-com">com</span></div>
    </div>

    <div class="gutter-r flex-none">
      <div class="ac-pal pal-r1 d-flex flex-column">
        <div class="pal-grip"></div>
        <div class="pal-cell d-flex align-items-center justify-content-center"><svg class="ic"><use href="#m-erase"/></svg></div>
        <div class="pal-cell d-flex align-items-center justify-content-center"><svg class="ic"><use href="#m-copy"/></svg></div>
        <div class="pal-cell d-flex align-items-center justify-content-center"><svg class="ic"><use href="#m-mir"/></svg></div>
        <div class="pal-cell d-flex align-items-center justify-content-center"><svg class="ic"><use href="#m-off"/></svg></div>
        <div class="pal-cell d-flex align-items-center justify-content-center"><svg class="ic"><use href="#m-arr"/></svg></div>
        <div class="pal-cell d-flex align-items-center justify-content-center"><svg class="ic"><use href="#m-mov"/></svg></div>
        <div class="pal-cell d-flex align-items-center justify-content-center"><svg class="ic"><use href="#m-rot"/></svg></div>
        <div class="pal-cell d-flex align-items-center justify-content-center"><svg class="ic"><use href="#m-sca"/></svg></div>
        <div class="pal-cell d-flex align-items-center justify-content-center"><svg class="ic"><use href="#m-str"/></svg></div>
        <div class="pal-cell d-flex align-items-center justify-content-center"><svg class="ic"><use href="#m-tri"/></svg></div>
        <div class="pal-cell d-flex align-items-center justify-content-center"><svg class="ic"><use href="#m-ext"/></svg></div>
        <div class="pal-cell d-flex align-items-center justify-content-center"><svg class="ic"><use href="#m-brk"/></svg></div>
        <div class="pal-cell d-flex align-items-center justify-content-center"><svg class="ic"><use href="#m-brk2"/></svg></div>
        <div class="pal-cell d-flex align-items-center justify-content-center"><svg class="ic"><use href="#m-join"/></svg></div>
        <div class="pal-cell d-flex align-items-center justify-content-center"><svg class="ic"><use href="#m-cha"/></svg></div>
        <div class="pal-cell d-flex align-items-center justify-content-center"><svg class="ic"><use href="#m-fil"/></svg></div>
        <div class="pal-cell d-flex align-items-center justify-content-center"><svg class="ic"><use href="#m-ble"/></svg></div>
        <div class="pal-cell d-flex align-items-center justify-content-center"><svg class="ic"><use href="#m-exp"/></svg></div>
      </div>
      <div class="ac-pal pal-r2 d-flex flex-column">
        <div class="pal-grip"></div>
        <div class="pal-cell d-flex align-items-center justify-content-center"><svg class="ic"><use href="#o-1"/></svg></div>
        <div class="pal-cell d-flex align-items-center justify-content-center"><svg class="ic"><use href="#o-2"/></svg></div>
        <div class="pal-cell d-flex align-items-center justify-content-center"><svg class="ic"><use href="#o-3"/></svg></div>
        <div class="pal-cell d-flex align-items-center justify-content-center"><svg class="ic"><use href="#o-4"/></svg></div>
        <div class="pal-sep"></div>
        <div class="pal-cell d-flex align-items-center justify-content-center"><svg class="ic"><use href="#o-5"/></svg></div>
        <div class="pal-cell d-flex align-items-center justify-content-center"><svg class="ic"><use href="#o-6"/></svg></div>
      </div>
    </div>
  </main>

  <footer id="ac-bottom" class="d-flex flex-none">
    <div class="ltabs d-flex align-items-start">
      <div class="ltab lt-m">Model</div>
      <div class="ltab lt-1">Layout1</div>
      <div class="ltab lt-2">Layout2</div>
      <div class="lt-new">+</div>
    </div>
    <div id="ac-status" class="d-flex">
      <span class="cell sc-48 sb-model d-flex align-items-center justify-content-center">MODEL</span>
      <span class="cell sl sc-23 d-flex align-items-center justify-content-center"><svg class="ic"><use href="#s-grid"/></svg></span>
      <span class="cell sc-24 d-flex align-items-center justify-content-center"><svg class="ic"><use href="#s-snap"/></svg></span>
      <span class="cell sc-18 d-flex align-items-center justify-content-center"><i class="ac-caret"></i></span>
      <span class="cell sl sc-25 d-flex align-items-center justify-content-center"><svg class="ic"><use href="#s-orth"/></svg></span>
      <span class="cell sc-24 d-flex align-items-center justify-content-center"><svg class="ic"><use href="#s-pol"/></svg></span>
      <span class="cell sc-14 d-flex align-items-center justify-content-center"><i class="ac-caret"></i></span>
      <span class="cell sc-26 d-flex align-items-center justify-content-center"><svg class="ic"><use href="#s-iso"/></svg></span>
      <span class="cell sc-14 d-flex align-items-center justify-content-center"><i class="ac-caret"></i></span>
      <span class="cell sl sc-24 d-flex align-items-center justify-content-center"><svg class="ic"><use href="#s-osn"/></svg></span>
      <span class="cell sc-23 d-flex align-items-center justify-content-center"><svg class="ic"><use href="#s-3d"/></svg></span>
      <span class="cell sc-15 d-flex align-items-center justify-content-center"><i class="ac-caret"></i></span>
      <span class="cell sl sc-25 d-flex align-items-center justify-content-center"><svg class="ic"><use href="#s-lw"/></svg></span>
      <span class="cell sl sc-24 d-flex align-items-center justify-content-center"><svg class="ic"><use href="#s-tr"/></svg></span>
      <span class="cell sl sc-22 d-flex align-items-center justify-content-center"><svg class="ic"><use href="#s-sel"/></svg></span>
      <span class="cell sc-17 d-flex align-items-center justify-content-center"><i class="ac-caret"></i></span>
      <span class="cell sl sc-26 d-flex align-items-center justify-content-center"><svg class="ic"><use href="#s-ann1"/></svg></span>
      <span class="cell sc-22 d-flex align-items-center justify-content-center"><svg class="ic"><use href="#s-ann2"/></svg></span>
      <span class="cell sc-24 d-flex align-items-center justify-content-center"><svg class="ic"><use href="#s-ann3"/></svg></span>
      <span class="cell sc-25 sb-scale d-flex align-items-center justify-content-center">1:1</span>
      <span class="cell sc-15 d-flex align-items-center justify-content-center"><i class="ac-caret"></i></span>
      <span class="cell sl sc-25 d-flex align-items-center justify-content-center"><svg class="ic"><use href="#s-gear"/></svg></span>
      <span class="cell sc-15 d-flex align-items-center justify-content-center"><i class="ac-caret"></i></span>
      <span class="cell sc-27 d-flex align-items-center justify-content-center"><svg class="ic"><use href="#s-plus"/></svg></span>
      <span class="cell sl sc-25 d-flex align-items-center justify-content-center"><svg class="ic"><use href="#s-obj"/></svg></span>
      <span class="cell sl sc-27 d-flex align-items-center justify-content-center"><svg class="ic"><use href="#s-hw"/></svg></span>
      <span class="cell sl sc-23 d-flex align-items-center justify-content-center"><svg class="ic"><use href="#s-acc"/></svg></span>
      <span class="cell sl sc-26 d-flex align-items-center justify-content-center"><svg class="ic"><use href="#s-full"/></svg></span>
      <span class="cell sc-25 d-flex align-items-center justify-content-center"><svg class="ic"><use href="#s-menu"/></svg></span>
    </div>
  </footer>
</div>
</body>
</html>
